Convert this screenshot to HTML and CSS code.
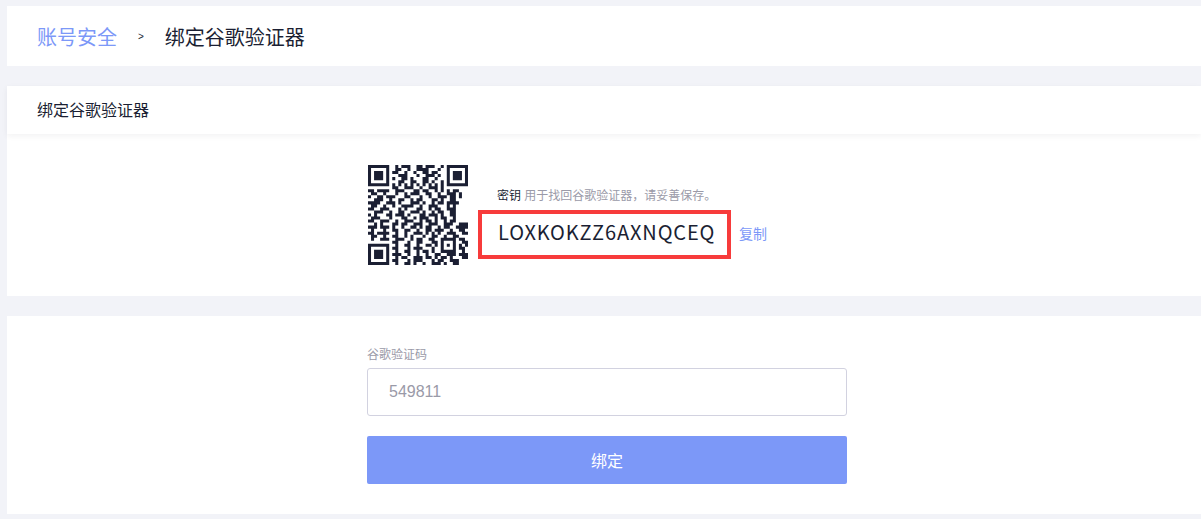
FILE: index.html
```html
<!DOCTYPE html>
<html lang="zh-CN">
<head>
    <meta charset="UTF-8">
    <title>绑定谷歌验证器</title>
    <link rel="stylesheet" href="styles.css">
</head>
<body>
    <div class="crumbs card">
        <a class="crumb-link">账号安全</a>
        <span class="crumb-sep">&gt;</span>
        <span class="crumb-current">绑定谷歌验证器</span>
    </div>

    <div class="card key-card">
        <div class="card-title">绑定谷歌验证器</div>
        <div class="key-body">
            <svg class="qr" viewBox="0 0 33 33">
                <path fill="none" stroke="#1b1f33" d="M0 .5H7M9 .5H10M11 .5H14M16 .5H18M19 .5H22M24 .5H25M26 .5H33
                M0 1.5H1M6 1.5H7M9 1.5H11M13 1.5H14M16 1.5H20M23 1.5H24M26 1.5H27M32 1.5H33
                M0 2.5H1M2 2.5H5M6 2.5H7M8 2.5H10M12 2.5H13M15 2.5H16M18 2.5H20M21 2.5H23M26 2.5H27M28 2.5H31M32 2.5H33
                M0 3.5H1M2 3.5H5M6 3.5H7M10 3.5H13M16 3.5H17M19 3.5H22M23 3.5H24M26 3.5H27M28 3.5H31M32 3.5H33
                M0 4.5H1M2 4.5H5M6 4.5H7M8 4.5H9M11 4.5H13M14 4.5H15M18 4.5H20M22 4.5H23M26 4.5H27M28 4.5H31M32 4.5H33
                M0 5.5H1M6 5.5H7M10 5.5H12M14 5.5H16M18 5.5H20M21 5.5H22M24 5.5H25M26 5.5H27M32 5.5H33
                M0 6.5H7M8 6.5H9M10 6.5H11M12 6.5H13M14 6.5H15M16 6.5H17M18 6.5H19M20 6.5H21M22 6.5H23M24 6.5H25M26 6.5H33
                M8 7.5H10M12 7.5H15M17 7.5H18M20 7.5H23M24 7.5H25
                M0 8.5H2M3 8.5H7M9 8.5H12M15 8.5H17M18 8.5H20M22 8.5H23M24 8.5H25M26 8.5H27M28 8.5H30
                M1 9.5H3M5 9.5H6M9 9.5H10M12 9.5H13M14 9.5H17M19 9.5H21M23 9.5H24M26 9.5H29M30 9.5H31
                M0 10.5H1M3 10.5H5M6 10.5H9M12 10.5H14M17 10.5H18M20 10.5H21M23 10.5H26M27 10.5H29M30 10.5H31
                M2 11.5H5M7 11.5H8M10 11.5H12M14 11.5H15M16 11.5H18M21 11.5H23M24 11.5H25M27 11.5H29
                M0 12.5H4M6 12.5H9M10 12.5H11M14 12.5H17M18 12.5H19M21 12.5H22M23 12.5H25M26 12.5H30
                M1 13.5H3M5 13.5H6M8 13.5H9M11 13.5H15M17 13.5H18M20 13.5H23M26 13.5H27M28 13.5H29
                M0 14.5H2M4 14.5H7M10 14.5H11M12 14.5H13M16 14.5H18M20 14.5H21M22 14.5H24M26 14.5H29
                M2 15.5H5M7 15.5H8M10 15.5H12M14 15.5H17M18 15.5H19M21 15.5H22M23 15.5H25M27 15.5H29
                M0 16.5H1M2 16.5H3M6 16.5H8M9 16.5H12M13 16.5H14M17 16.5H19M20 16.5H23M24 16.5H25M27 16.5H29
                M1 17.5H4M7 17.5H8M11 17.5H13M15 17.5H16M17 17.5H20M22 17.5H23M24 17.5H26M28 17.5H29
                M0 18.5H2M4 18.5H7M9 18.5H10M12 18.5H15M17 18.5H18M19 18.5H21M22 18.5H23M25 18.5H26M27 18.5H29
                M2 19.5H3M4 19.5H5M8 19.5H10M11 19.5H13M15 19.5H18M20 19.5H23M25 19.5H28M30 19.5H33
                M0 20.5H3M4 20.5H7M8 20.5H9M11 20.5H12M14 20.5H16M17 20.5H18M19 20.5H21M23 20.5H24M25 20.5H27M29 20.5H33
                M1 21.5H2M5 21.5H6M8 21.5H10M12 21.5H14M16 21.5H17M19 21.5H21M22 21.5H25M27 21.5H28M30 21.5H32
                M0 22.5H2M3 22.5H7M9 22.5H10M12 22.5H13M15 22.5H18M19 22.5H20M21 22.5H22M23 22.5H24M26 22.5H29M31 22.5H33
                M1 23.5H3M5 23.5H6M8 23.5H10M12 23.5H13M14 23.5H15M18 23.5H19M21 23.5H23M25 23.5H26M28 23.5H30
                M1 24.5H2M4 24.5H7M9 24.5H12M14 24.5H15M16 24.5H18M20 24.5H22M24 24.5H29M30 24.5H32
                M8 25.5H10M13 25.5H14M16 25.5H18M21 25.5H23M24 25.5H25M28 25.5H29M31 25.5H33
                M0 26.5H7M9 26.5H10M12 26.5H14M16 26.5H17M19 26.5H21M22 26.5H23M24 26.5H25M26 26.5H27M28 26.5H29M30 26.5H31M32 26.5H33
                M0 27.5H1M6 27.5H7M8 27.5H10M13 27.5H14M15 27.5H18M21 27.5H22M24 27.5H25M28 27.5H29M30 27.5H32
                M0 28.5H1M2 28.5H5M6 28.5H7M9 28.5H10M12 28.5H14M16 28.5H17M18 28.5H20M21 28.5H22M24 28.5H29M31 28.5H32
                M0 29.5H1M2 29.5H5M6 29.5H7M8 29.5H11M13 29.5H14M16 29.5H17M19 29.5H20M22 29.5H24M26 29.5H29M30 29.5H33
                M0 30.5H1M2 30.5H5M6 30.5H7M9 30.5H10M11 30.5H13M15 30.5H18M19 30.5H21M22 30.5H23M24 30.5H26M27 30.5H28M31 30.5H33
                M0 31.5H1M6 31.5H7M8 31.5H10M13 31.5H14M15 31.5H18M21 31.5H22M23 31.5H25M27 31.5H30
                M0 32.5H7M9 32.5H10M12 32.5H14M15 32.5H16M18 32.5H19M21 32.5H24M25 32.5H26M28 32.5H30"/>
            </svg>
            <div class="key-info">
                <p class="key-hint"><span class="key-label">密钥</span> 用于找回谷歌验证器，请妥善保存。</p>
                <div class="key-row">
                    <span class="key-value">LOXKOKZZ6AXNQCEQ</span>
                    <a class="copy-link">复制</a>
                </div>
            </div>
        </div>
    </div>

    <div class="card form-card">
        <form class="bind-form">
            <label class="field-label" for="code">谷歌验证码</label>
            <input class="field-input" id="code" type="text" placeholder="549811">
            <button class="bind-button" type="button">绑定</button>
        </form>
    </div>
</body>
</html>
```

FILE: styles.css
```css
* {
    box-sizing: border-box;
}

html, body {
    height: 100%;
}

body {
    margin: 0;
    padding: 6px 0 0 7px;
    overflow: hidden;
    background-color: #f2f3f8;
    color: #1b1f33;
    font-family: "Liberation Sans", "Noto Sans CJK SC", sans-serif;
}

.card {
    background: #fff;
    margin-bottom: 20px;
}

.crumbs {
    display: flex;
    align-items: center;
    height: 60px;
    padding-left: 30px;
    font-size: 20px;
}

.crumb-link {
    color: #7c98f8;
}

.crumb-sep {
    margin: 0 21px;
    font-size: 10px;
}

.card-title {
    height: 48px;
    line-height: 50px;
    padding-left: 30px;
    font-size: 16px;
    box-shadow: 0 2px 6px rgba(27, 31, 51, 0.06);
}

.key-body {
    display: flex;
    height: 162px;
    padding: 31px 0 0 361px;
}

.qr {
    width: 100px;
    height: 100px;
}

.key-info {
    margin-left: 10px;
}

.key-hint {
    margin: 23px 0 0 19px;
    font-size: 12px;
    line-height: 16px;
    white-space: nowrap;
    color: #9a9aa8;
}

.key-label {
    color: #1b1f33;
}

.key-row {
    display: flex;
    align-items: center;
    margin-top: 6px;
}

.key-value {
    width: 253px;
    height: 49px;
    line-height: 35px;
    padding-left: 16px;
    border: 4px solid #f73b3b;
    font-family: "Noto Sans CJK SC", sans-serif;
    font-size: 20px;
    letter-spacing: 0.85px;
    white-space: nowrap;
}

.copy-link {
    margin: 0 0 3px 8px;
    font-size: 14px;
    color: #7c98f8;
}

.form-card {
    height: 198px;
    padding: 31px 0 0 360px;
}

.bind-form {
    display: flex;
    flex-direction: column;
    width: 480px;
}

.field-label {
    font-size: 12px;
    line-height: 16px;
    color: #9a9aa8;
}

.field-input {
    height: 48px;
    margin-top: 5px;
    padding: 0 21px;
    border: 1px solid #d2d2e0;
    border-radius: 3px;
    font: 16px "Liberation Sans", sans-serif;
}

.field-input::placeholder {
    color: #9a9aa8;
}

.bind-button {
    height: 48px;
    margin-top: 20px;
    border: none;
    border-radius: 2px;
    background-color: #7c98f8;
    color: #fff;
    font: 16px "Liberation Sans", "Noto Sans CJK SC", sans-serif;
}
```
